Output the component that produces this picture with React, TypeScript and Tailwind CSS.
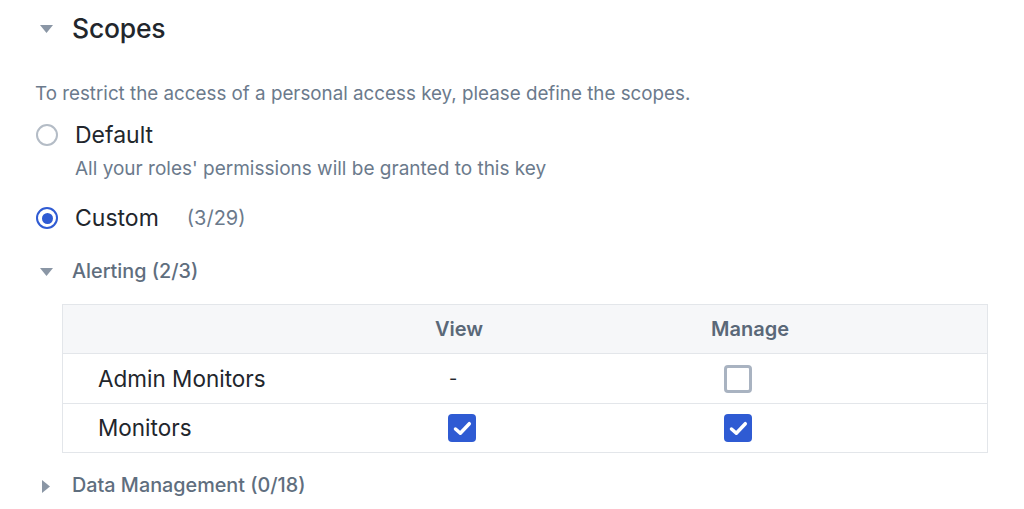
import React from "react";

const Caret = ({ dir = "down" }: { dir?: "down" | "right" }) =>
  dir === "down" ? (
    <svg width="13" height="8" viewBox="0 0 13 8"><path d="M0 0h13L6.5 8z" fill="#8a96a5" /></svg>
  ) : (
    <svg width="8" height="13" viewBox="0 0 8 13"><path d="M0 0v13L8 6.5z" fill="#8a96a5" /></svg>
  );

const Check = ({ checked }: { checked: boolean }) =>
  checked ? (
    <div className="w-[28px] h-[28px] rounded-[4px] bg-[#2f5bd3] flex items-center justify-center">
      <svg width="19" height="15" viewBox="0 0 19 15">
        <path d="M2.5 8l4.8 4.2 9-9.5" stroke="white" strokeWidth="3.5" fill="none" strokeLinecap="round" strokeLinejoin="round" />
      </svg>
    </div>
  ) : (
    <div className="w-[28px] h-[28px] rounded-[4px] border-[3px] border-[#a9b3c1] bg-white" />
  );

export default function App() {
  return (
    <div className="w-[1024px] h-[509px] bg-white overflow-hidden" style={{ fontFamily: "Inter, 'Noto Sans', sans-serif" }}>
      <div className="flex items-center h-[56px] pl-[40px] pt-[1px]">
        <Caret />
        <span className="ml-[19px] text-[26.5px] font-medium text-[#22262c] tracking-[-0.2px]">Scopes</span>
      </div>
      <div className="pl-[35px] pt-[24px] text-[18.8px] text-[#6b7a8c] leading-[28px]">
        To restrict the access of a personal access key, please define the scopes.
      </div>
      <div className="pl-[36px] mt-[12px] flex items-center h-[30px]">
        <div className="w-[22px] h-[22px] rounded-full border-2 border-[#b4bcc6] bg-white" />
        <span className="ml-[17px] text-[23px] text-[#22262c]">Default</span>
      </div>
      <div className="pl-[75px] mt-[6px] text-[19px] text-[#6b7a8c] leading-[26px]">
        All your roles' permissions will be granted to this key
      </div>
      <div className="pl-[36px] mt-[21px] flex items-center h-[30px]">
        <div className="w-[22px] h-[22px] rounded-full border-2 border-[#2f5bd3] bg-white flex items-center justify-center">
          <div className="w-[11px] h-[11px] rounded-full bg-[#2f5bd3]" />
        </div>
        <span className="ml-[17px] text-[23px] text-[#22262c]">Custom</span>
        <span className="ml-[28px] text-[20px] text-[#6b7a8c]">(3/29)</span>
      </div>
      <div className="pl-[40px] mt-[26px] flex items-center h-[26px]">
        <Caret />
        <span className="ml-[19px] text-[19.8px] font-medium text-[#5f6e7e]">Alerting (2/3)</span>
      </div>
      <div className="ml-[62px] mt-[19px] w-[926px] border border-[#e3e6ea]">
        <div className="grid grid-cols-[250px_292px_290px_1fr] h-[48px] items-center bg-[#f6f7f9] text-[20px] font-semibold text-[#5a6878]">
          <div />
          <div className="text-center">View</div>
          <div className="text-center">Manage</div>
          <div />
        </div>
        <div className="grid grid-cols-[250px_292px_290px_1fr] h-[50px] items-center border-t border-[#e3e6ea] text-[22.5px] text-[#22262c]">
          <div className="pl-[35px]">Admin Monitors</div>
          <div className="pl-[136px] text-[18px] text-[#22262c]">-</div>
          <div className="pl-[119px] flex"><Check checked={false} /></div>
          <div />
        </div>
        <div className="grid grid-cols-[250px_292px_290px_1fr] h-[49px] items-center border-t border-[#e3e6ea] text-[22.5px] text-[#22262c]">
          <div className="pl-[35px]">Monitors</div>
          <div className="pl-[135px] flex"><Check checked /></div>
          <div className="pl-[119px] flex"><Check checked /></div>
          <div />
        </div>
      </div>
      <div className="pl-[42px] mt-[20px] flex items-center h-[26px]">
        <Caret dir="right" />
        <span className="ml-[22px] text-[19.8px] font-medium text-[#5f6e7e]">Data Management (0/18)</span>
      </div>
    </div>
  );
}
